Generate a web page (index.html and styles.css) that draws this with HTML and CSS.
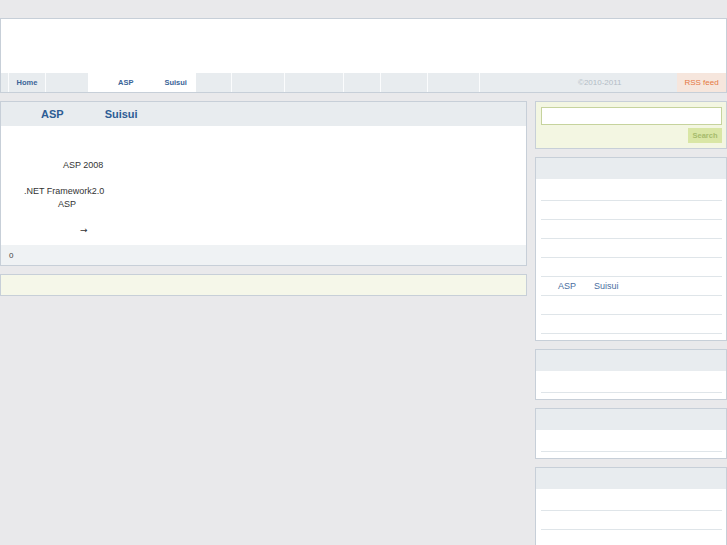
FILE: index.html
```html
<!DOCTYPE html>
<html>
<head>
<meta charset="utf-8">
<link rel="stylesheet" href="styles.css">
</head>
<body>
<div class="page">
  <div class="header">
    <div class="banner"></div>
    <div class="nav">
      <div class="cell c0"></div>
      <div class="cell home"><span>Home</span></div>
      <div class="cell c2"></div>
      <div class="cell active"><span>ASP</span><span class="sui">Suisui</span></div>
      <div class="cell c4"></div>
      <div class="cell c5"></div>
      <div class="cell c6"></div>
      <div class="cell c7"></div>
      <div class="cell c8"></div>
      <div class="cell c9"></div>
      <div class="cell copy">©2010-2011</div>
      <div class="cell rss">RSS feed</div>
    </div>
  </div>

  <div class="columns">
    <div class="main">
      <div class="post">
        <div class="post-title"><span class="t1">ASP</span><span class="t2">Suisui</span></div>
        <div class="post-body">
          <div class="line l1">ASP 2008</div>
          <div class="line empty"></div>
          <div class="line l2">.NET Framework2.0</div>
          <div class="line l3">ASP</div>
          <div class="line empty"></div>
          <div class="line l4"><span class="arrow">→</span></div>
        </div>
        <div class="post-foot">0</div>
      </div>
      <div class="note"></div>
    </div>

    <div class="sidebar">
      <div class="search">
        <div class="search-input"></div>
        <div class="search-row"><span class="search-btn">Search</span></div>
      </div>

      <div class="widget">
        <div class="widget-head"></div>
        <ul class="list">
          <li></li>
          <li></li>
          <li></li>
          <li></li>
          <li></li>
          <li class="link"><span>ASP</span><span class="sui2">Suisui</span></li>
          <li></li>
          <li></li>
        </ul>
      </div>

      <div class="widget">
        <div class="widget-head"></div>
        <ul class="list">
          <li></li>
        </ul>
      </div>

      <div class="widget">
        <div class="widget-head"></div>
        <ul class="list">
          <li></li>
        </ul>
      </div>

      <div class="widget">
        <div class="widget-head"></div>
        <ul class="list">
          <li></li>
          <li></li>
          <li></li>
          <li></li>
        </ul>
      </div>
    </div>
  </div>
</div>
</body>
</html>
```
FILE: styles.css
```css
html, body {
  margin: 0;
  padding: 0;
}
body {
  background: #e9e9eb;
  font-family: "Liberation Sans", Arial, sans-serif;
  color: #333;
  width: 727px;
  height: 545px;
  overflow: hidden;
}
.page {
  padding-top: 18px;
}
.header {
  border: 1px solid #c7cfd8;
  background: #fff;
}
.banner {
  height: 54px;
}
.nav {
  display: flex;
  height: 19px;
  background: #e8ecef;
}
.cell {
  height: 19px;
  border-right: 1px solid #fbfcfd;
  display: flex;
  align-items: center;
  font-size: 7.5px;
  font-weight: bold;
  color: #3b6597;
  flex: none;
}
.c0 { width: 7px; }
.home { width: 36px; justify-content: center; }
.c2 { width: 42px; border-right: none; }
.active { width: 108px; background: #fff; border-right: none; padding-left: 30px; box-sizing: border-box; }
.active .sui { margin-left: 31px; }
.c4 { width: 35px; }
.c5 { width: 52px; }
.c6 { width: 58px; }
.c7 { width: 36px; }
.c8 { width: 46px; }
.c9 { width: 51px; }
.copy {
  flex: 1;
  border-right: none;
  padding-left: 98px;
  font-weight: normal;
  font-size: 8px;
  color: #b3bcc6;
}
.rss {
  width: 49px;
  border-right: none;
  background: #f6e6dd;
  justify-content: center;
  font-weight: normal;
  font-size: 8px;
  color: #e57842;
}

.columns {
  display: flex;
  gap: 8px;
  margin-top: 8px;
  align-items: flex-start;
}
.main {
  width: 527px;
  flex: none;
  display: flex;
  flex-direction: column;
  gap: 8px;
}
.post {
  border: 1px solid #c7cfd8;
  background: #fff;
}
.post-title {
  height: 24px;
  background: #e8ecef;
  display: flex;
  align-items: center;
  font-size: 11px;
  font-weight: bold;
  color: #2d5d95;
}
.post-title .t1 { margin-left: 40px; }
.post-title .t2 { margin-left: 41px; }
.post-body {
  height: 119px;
  box-sizing: border-box;
  padding-top: 33px;
  font-size: 9px;
}
.line {
  height: 13px;
  line-height: 13px;
  white-space: nowrap;
}
.l1 { padding-left: 62px; }
.l2 { padding-left: 23px; }
.l3 { padding-left: 57px; }
.l4 { padding-left: 79px; }
.arrow {
  font-family: "DejaVu Sans", sans-serif;
  font-size: 9px;
}
.post-foot {
  height: 20px;
  background: #eff2f4;
  display: flex;
  align-items: center;
  padding-left: 8px;
  font-size: 8px;
  color: #444;
}
.note {
  height: 20px;
  border: 1px solid #c7cfd8;
  background: #f5f7e9;
}

.sidebar {
  width: 192px;
  flex: none;
  display: flex;
  flex-direction: column;
  gap: 8px;
}
.search {
  border: 1px solid #c7cfd8;
  background: #f3f6e2;
  padding: 5px 4px 5px 5px;
}
.search-input {
  height: 16px;
  background: #fff;
  border: 1px solid #c6d39d;
}
.search-row {
  display: flex;
  justify-content: flex-end;
  margin-top: 3px;
}
.search-btn {
  width: 34px;
  height: 15px;
  background: #d9e6a5;
  color: #a6bb6c;
  font-size: 7.5px;
  font-weight: bold;
  display: flex;
  align-items: center;
  justify-content: center;
}
.widget {
  border: 1px solid #c7cfd8;
  background: #fff;
}
.widget-head {
  height: 21px;
  background: #e8ecef;
}
.list {
  list-style: none;
  margin: 0 4px 0 5px;
  padding: 3px 0 6px;
}
.list li {
  height: 18px;
  border-bottom: 1px solid #dfe5e9;
  display: flex;
  align-items: center;
  font-size: 9px;
  color: #4a6e9f;
}
.list li.link { padding-left: 17px; }
.list li .sui2 { margin-left: 18px; }
```
